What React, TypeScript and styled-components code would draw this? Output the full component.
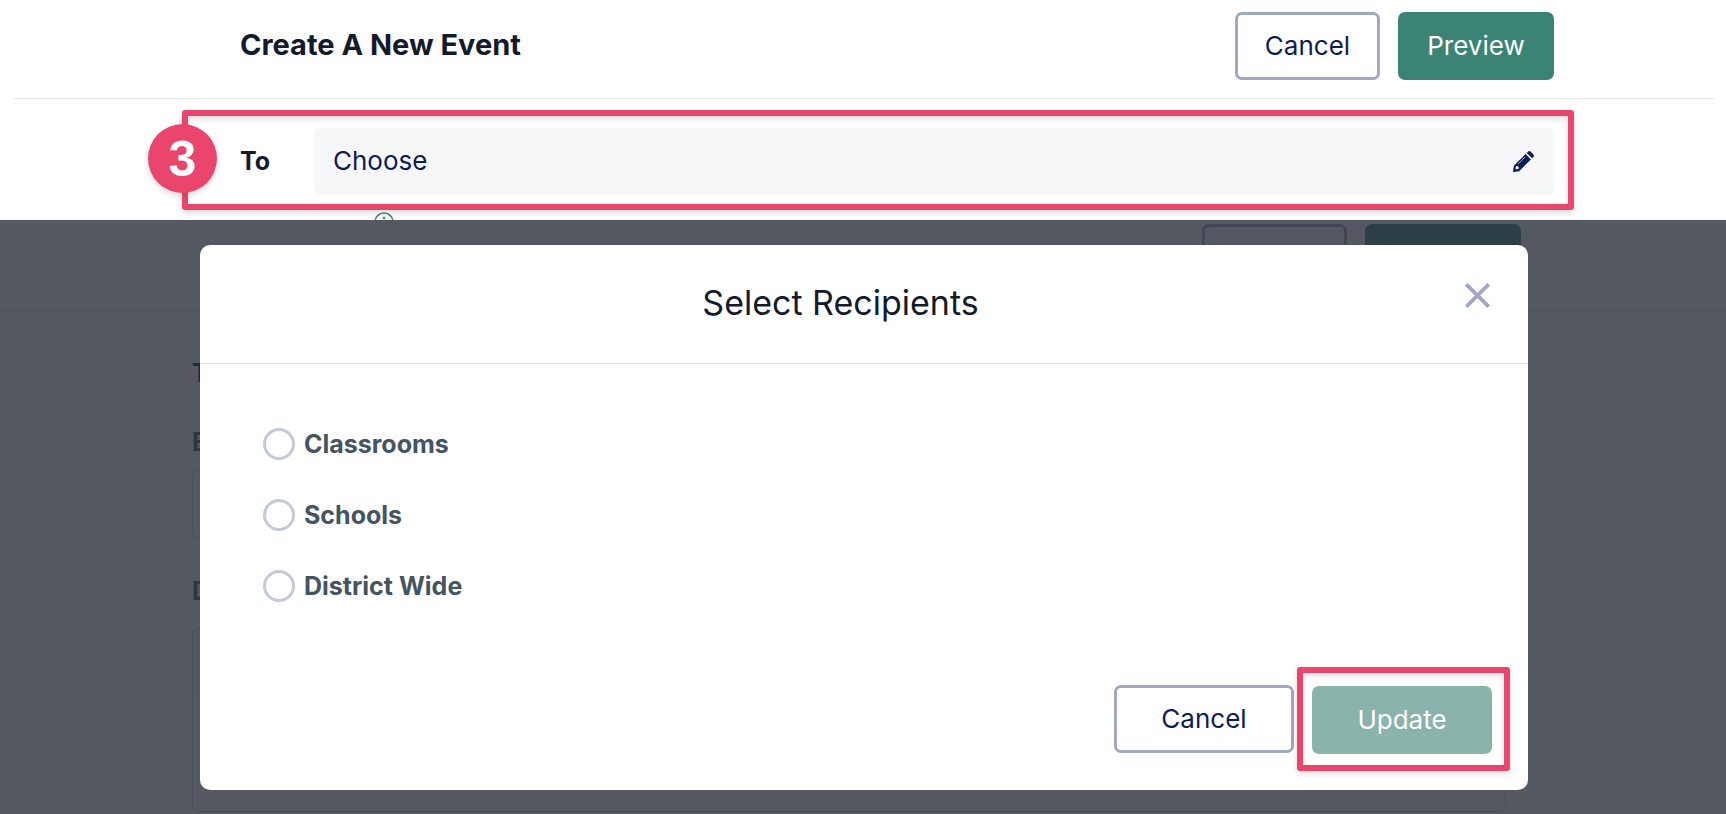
import React, { useState } from "react";
import styled, { createGlobalStyle, css } from "styled-components";

const color = {
  ink: "#131a2b",
  slate: "#445461",
  navy: "#0c1c54",
  green: "#3b8374",
  greenDisabled: "#8ab4ab",
  outline: "#a0a8c4",
  ring: "#c4c9da",
  line: "#e2e3e5",
  field: "#f6f7f9",
  callout: "#ea466d",
};

const GlobalStyle = createGlobalStyle`
  *, *::before, *::after { box-sizing: border-box; }
  body {
    margin: 0;
    background: #fff;
    color: ${color.ink};
    font-family: Inter, "Liberation Sans", sans-serif;
    font-size: 26px;
    font-weight: 400;
    line-height: 32px;
  }
  h1, h2 { margin: 0; }
  button, input, textarea { font: inherit; }
`;

const Panel = styled.section`
  overflow: hidden;
`;

const Header = styled.header<{ $compact?: boolean }>`
  display: flex;
  align-items: center;
  justify-content: space-between;
  margin: ${(p) => (p.$compact ? "0" : "0 12px 0 14px")};
  padding: ${(p) => (p.$compact ? "4px 205px 18px 192px" : "12px 160px 18px 226px")};
  border-bottom: 1px solid ${color.line};
`;

const PageTitle = styled.h1`
  font-size: 29px;
  font-weight: 700;
  line-height: 32px;
  padding-bottom: 2px;
`;

const ButtonGroup = styled.div`
  display: flex;
  gap: 18px;
`;

const Button = styled.button<{ $primary?: boolean; $width: number }>`
  min-width: ${(p) => p.$width}px;
  height: 68px;
  padding: 0;
  border-radius: 7px;
  cursor: pointer;
  ${(p) =>
    p.$primary
      ? css`
          border: 0;
          background: ${color.green};
          color: #fff;
        `
      : css`
          border: 3px solid ${color.outline};
          background: #fff;
          color: ${color.navy};
        `}
  &:disabled {
    background: ${color.greenDisabled};
    cursor: default;
  }
`;

const Callout = styled.div`
  position: relative;
  border: 6px solid ${color.callout};
  border-radius: 3px;
  box-shadow: 0 3px 6px rgba(0, 0, 0, 0.14), inset 0 3px 6px rgba(0, 0, 0, 0.12);
`;

const RecipientCallout = styled(Callout)`
  margin: 11px 152px 0 182px;
  padding: 11px 14px 9px 52px;
`;

const UpdateCallout = styled(Callout)`
  padding: 13px 12px 11px 9px;
`;

const StepBadge = styled.span`
  position: absolute;
  top: 8px;
  left: -40px;
  display: grid;
  place-items: center;
  width: 69px;
  height: 69px;
  border-radius: 50%;
  background: ${color.callout};
  box-shadow: 0 3px 6px rgba(0, 0, 0, 0.14);
  color: #fff;
  font-family: "Liberation Sans", Arial, sans-serif;
  font-size: 50px;
  font-weight: 700;
  line-height: 64px;
`;

const RecipientRow = styled.div`
  display: grid;
  grid-template-columns: 74px 1fr;
  align-items: center;
  min-height: 68px;
`;

const RowLabel = styled.label`
  font-size: 25px;
  font-weight: 700;
`;

const RecipientField = styled.button`
  display: flex;
  align-items: center;
  justify-content: space-between;
  height: 68px;
  padding: 0 20px 0 19px;
  border: 0;
  border-radius: 7px;
  background: ${color.field};
  color: ${color.navy};
  cursor: pointer;
`;

const HintRow = styled.div`
  display: flex;
  align-items: flex-start;
  height: 10px;
  padding: 2px 0 0 374px;
  overflow: hidden;
`;

const Stage = styled.section`
  display: grid;
  overflow: hidden;
`;

const Backdrop = styled.div`
  grid-area: 1 / 1;
  padding-bottom: 2px;
`;

const Scrim = styled.div`
  position: relative;
  grid-area: 1 / 1;
  padding: 25px 198px 24px 200px;
  background: rgba(41, 46, 56, 0.8);
`;

const EventForm = styled.form`
  display: flex;
  flex-direction: column;
  padding: 28px 220px 0 192px;
`;

const FieldLabel = styled.label<{ $top: number; $bottom: number }>`
  padding: ${(p) => p.$top}px 0 ${(p) => p.$bottom}px;
  color: ${color.slate};
  font-size: 25px;
  font-weight: 700;
`;

const TextInput = styled.input`
  height: 68px;
  border: 1px solid ${color.ring};
  border-radius: 7px;
  background: #fff;
`;

const Editor = styled.div`
  display: flex;
  flex-direction: column;
  border: 1px solid ${color.ring};
  border-radius: 7px;
`;

const EditorToolbar = styled.div`
  height: 67px;
  background: ${color.field};
  border-radius: 6px 6px 0 0;
`;

const EditorText = styled.textarea`
  height: 115px;
  border: 0;
  background: transparent;
  resize: none;
`;

const Dialog = styled.div`
  border-radius: 10px;
  background: #fff;
`;

const DialogHeader = styled.header`
  display: flex;
  align-items: flex-start;
  padding: 38px 38px 40px 16px;
  border-bottom: 1px solid ${color.line};
`;

const DialogTitle = styled.h2`
  flex: 1;
  font-size: 34px;
  font-weight: 400;
  line-height: 40px;
  text-align: center;
`;

const CloseButton = styled.button`
  display: flex;
  padding: 0;
  border: 0;
  background: none;
  color: ${color.outline};
  cursor: pointer;
`;

const OptionList = styled.div`
  display: flex;
  flex-direction: column;
  align-items: flex-start;
  gap: 39px;
  padding: 64px 63px 65px;
`;

const Option = styled.label`
  display: flex;
  align-items: center;
  gap: 9px;
  color: ${color.slate};
  font-size: 25px;
  font-weight: 700;
  cursor: pointer;
`;

const Radio = styled.input`
  appearance: none;
  width: 32px;
  height: 32px;
  margin: 0;
  border: 3px solid ${color.ring};
  border-radius: 50%;
  background: #fff;
  cursor: pointer;
  &:checked {
    border: 9px solid ${color.green};
  }
`;

const DialogFooter = styled.footer`
  display: flex;
  align-items: center;
  justify-content: flex-end;
  gap: 3px;
  padding: 0 18px 19px;
`;

const InfoIcon = () => (
  <svg width="20" height="20" viewBox="0 0 20 20" fill="none" stroke={color.green} aria-hidden="true">
    <circle cx="10" cy="10" r="9" strokeWidth="1.5" />
    <circle cx="10" cy="6" r="1.3" fill={color.green} stroke="none" />
    <path d="M10 9v6" strokeWidth="1.6" />
  </svg>
);

const PencilIcon = () => (
  <svg width="21" height="21" viewBox="0 0 21 21" fill="currentColor" aria-hidden="true">
    <path d="M13.8 1.9 15.1.6Q16.3-.5 17.5.6L20.4 3.5Q21.5 4.7 20.4 5.9L19.1 7.2Z" />
    <path
      fillRule="evenodd"
      d="M12.6 3.1 17.9 8.4 6.2 20.2.8 21Q0 21 0 20.2L.9 14.8ZM2.7 16.1V18.3H4.3L5.9 17.6 5.4 15.5 3.4 15Z"
    />
    <path d="M5.2 12.9 12 6.1" fill="none" stroke="#a6adc5" strokeWidth="1" />
  </svg>
);

const CloseIcon = () => (
  <svg width="25" height="25" viewBox="0 0 25 25" fill="none" stroke="currentColor" strokeWidth="3.8" aria-hidden="true">
    <path d="M1.3 1.3 23.7 23.7M23.7 1.3 1.3 23.7" />
  </svg>
);

const audiences = ["Classrooms", "Schools", "District Wide"];

export default function App() {
  const [audience, setAudience] = useState("");

  return (
    <main>
      <GlobalStyle />
      <Panel>
        <Header>
          <PageTitle>Create A New Event</PageTitle>
          <ButtonGroup>
            <Button type="button" $width={145}>Cancel</Button>
            <Button type="button" $width={156} $primary>Preview</Button>
          </ButtonGroup>
        </Header>
        <RecipientCallout>
          <StepBadge>3</StepBadge>
          <RecipientRow>
            <RowLabel htmlFor="recipients">To</RowLabel>
            <RecipientField id="recipients" type="button">
              Choose
              <PencilIcon />
            </RecipientField>
          </RecipientRow>
        </RecipientCallout>
        <HintRow>
          <InfoIcon />
        </HintRow>
      </Panel>

      <Stage>
        <Backdrop inert>
          <Header $compact>
            <span />
            <ButtonGroup>
              <Button type="button" $width={145} aria-label="Cancel" />
              <Button type="button" $width={156} $primary aria-label="Preview" />
            </ButtonGroup>
          </Header>
          <EventForm>
            <RecipientRow>
              <RowLabel>To</RowLabel>
            </RecipientRow>
            <FieldLabel htmlFor="event-title" $top={19} $bottom={12}>Event</FieldLabel>
            <TextInput id="event-title" />
            <FieldLabel htmlFor="event-details" $top={37} $bottom={21}>Details</FieldLabel>
            <Editor>
              <EditorToolbar />
              <EditorText id="event-details" />
            </Editor>
          </EventForm>
        </Backdrop>
        <Scrim>
          <Dialog role="dialog" aria-modal="true" aria-labelledby="dialog-title">
            <DialogHeader>
              <DialogTitle id="dialog-title">Select Recipients</DialogTitle>
              <CloseButton type="button" aria-label="Close">
                <CloseIcon />
              </CloseButton>
            </DialogHeader>
            <OptionList role="radiogroup" aria-labelledby="dialog-title">
              {audiences.map((name) => (
                <Option key={name}>
                  <Radio
                    type="radio"
                    name="audience"
                    value={name}
                    checked={audience === name}
                    onChange={() => setAudience(name)}
                  />
                  {name}
                </Option>
              ))}
            </OptionList>
            <DialogFooter>
              <Button type="button" $width={180}>Cancel</Button>
              <UpdateCallout>
                <Button type="button" $width={180} $primary disabled={!audience}>Update</Button>
              </UpdateCallout>
            </DialogFooter>
          </Dialog>
        </Scrim>
      </Stage>
    </main>
  );
}
